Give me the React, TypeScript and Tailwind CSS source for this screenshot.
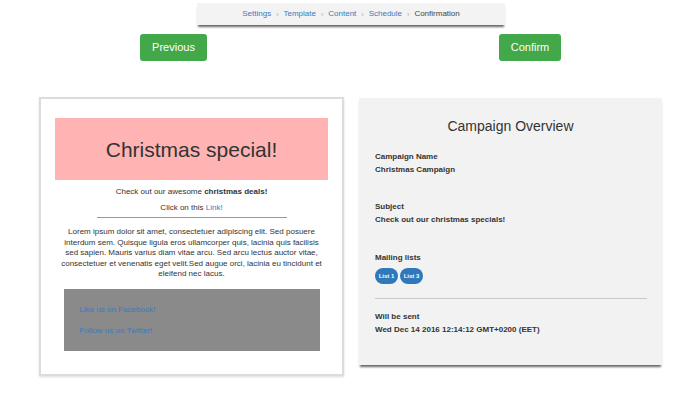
import React from "react";

const steps = ["Settings", "Template", "Content", "Schedule"];

function Breadcrumb() {
    return (
        <div className="ml-[197px] w-[308px] h-[22px] mt-[3px] bg-[#f3f3f3] shadow-[0_3px_2px_-1px_rgba(0,0,0,0.6)] flex items-center justify-center text-[8px] leading-none">
            {steps.map((s) => (
                <React.Fragment key={s}>
                    <span className="text-[#3a7bbf]">{s}</span>
                    <span className="text-[#aaa] px-[5px] text-[7px]">›</span>
                </React.Fragment>
            ))}
            <span className="text-[#444]">Confirmation</span>
        </div>
    );
}

function EmailPreview() {
    return (
        <div className="ml-[39px] w-[305px] h-[279px] bg-white border-2 border-[#dcdcdc] shadow-[0_1px_2px_rgba(0,0,0,0.15)] pt-[19px] px-[14px] text-[#333]">
            <div className="h-[62px] bg-[#ffb3b3] flex items-center justify-center text-[21px] leading-none">
                Christmas special!
            </div>
            <p className="mt-[7px] text-center text-[8px] leading-[10px]">
                Check out our awesome <b>christmas deals!</b>
            </p>
            <p className="mt-[6px] text-center text-[8px] leading-[10px]">
                Click on this <span className="text-[#3a7bbf]">Link!</span>
            </p>
            <div className="mx-auto mt-[4px] w-[190px] border-t border-[#999]" />
            <p className="mt-[9px] px-[3px] text-center text-[8px] leading-[10.5px]">
                Lorem ipsum dolor sit amet, consectetuer adipiscing elit. Sed posuere interdum sem. Quisque ligula eros ullamcorper quis, lacinia quis facilisis sed sapien. Mauris varius diam vitae arcu. Sed arcu lectus auctor vitae, consectetuer et venenatis eget velit.Sed augue orci, lacinia eu tincidunt et eleifend nec lacus.
            </p>
            <div className="mx-auto mt-[9px] w-[256px] h-[62px] bg-[#8a8a8a] pl-[16px] pt-[16px] text-[8px] leading-[10px] text-[#3a7bbf]">
                <p>Like us on Facebook!</p>
                <p className="mt-[11px]">Follow us on Twitter!</p>
            </div>
        </div>
    );
}

function Field({ label, value }: { label: string; value: string }) {
    return (
        <div className="font-bold text-[8px] leading-[13px]">
            <p>{label}</p>
            <p>{value}</p>
        </div>
    );
}

function Overview() {
    return (
        <div className="ml-[15px] w-[303px] h-[267px] bg-[#f2f2f2] shadow-[0_3px_2px_-1px_rgba(0,0,0,0.6)] px-[16px] pt-[19px] text-[#333] mt-[1px]">
            <h2 className="text-center text-[14px] leading-[18px]">Campaign Overview</h2>
            <div className="mt-[15px]">
                <Field label="Campaign Name" value="Christmas Campaign" />
            </div>
            <div className="mt-[24px]">
                <Field label="Subject" value="Check out our christmas specials!" />
            </div>
            <p className="mt-[25px] font-bold text-[8px] leading-[13px]">Mailing lists</p>
            <div className="mt-[4px] flex gap-[2px]">
                <span className="h-[16px] w-[23px] rounded-full bg-[#2f78b9] text-white text-[6px] font-bold flex items-center justify-center">List 1</span>
                <span className="h-[16px] w-[23px] rounded-full bg-[#2f78b9] text-white text-[6px] font-bold flex items-center justify-center">List 3</span>
            </div>
            <div className="mt-[14px] w-[272px] border-t border-[#c8c8c8]" />
            <div className="mt-[11px]">
                <Field label="Will be sent" value="Wed Dec 14 2016 12:14:12 GMT+0200 (EET)" />
            </div>
        </div>
    );
}

export default function App() {
    return (
        <div className="w-[685px] h-[418px] bg-white overflow-hidden font-['Liberation_Sans',Arial,sans-serif]">
            <Breadcrumb />
            <div className="mt-[9px] flex">
                <button className="ml-[140px] w-[67px] h-[27px] rounded-[3px] bg-[#43a849] text-white text-[11px]">Previous</button>
                <button className="ml-[292px] w-[62px] h-[27px] rounded-[3px] bg-[#43a849] text-white text-[11px]">Confirm</button>
            </div>
            <div className="mt-[36px] flex items-start">
                <EmailPreview />
                <Overview />
            </div>
        </div>
    );
}
